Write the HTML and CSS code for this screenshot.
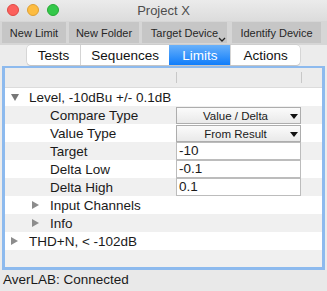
FILE: index.html
```html
<!DOCTYPE html>
<html lang="en">
<head>
    <meta charset="UTF-8">
    <title>Project X</title>
    <link rel="stylesheet" href="styles.css">
</head>
<body>
    <div class="window">
        <div class="titlebar">
            <div class="lights">
                <span class="light red"></span>
                <span class="light yellow"></span>
                <span class="light green"></span>
            </div>
            <div class="title">Project X</div>
        </div>

        <div class="toolbar">
            <button class="tool w-limit">New Limit</button>
            <button class="tool w-folder">New Folder</button>
            <button class="tool w-target">Target Device<svg class="chev" width="8" height="5" viewBox="0 0 8 5"><path d="M1 1 L4 4 L7 1" fill="none" stroke="#222" stroke-width="1.3"/></svg></button>
            <button class="tool w-identify">Identify Device</button>
        </div>

        <div class="tabrow">
            <div class="segmented">
                <div class="seg s-tests">Tests</div>
                <div class="seg s-seq">Sequences</div>
                <div class="seg s-limits active">Limits</div>
                <div class="seg s-actions">Actions</div>
            </div>
        </div>

        <div class="outline">
            <div class="row header">
                <div class="cell"></div>
                <div class="cell divided"></div>
                <div class="cell divided"></div>
            </div>
            <div class="row">
                <div class="cell name lvl0"><span class="tri open"></span>Level, -10dBu +/- 0.1dB</div>
                <div class="cell"></div>
                <div class="cell"></div>
            </div>
            <div class="row alt">
                <div class="cell name lvl1">Compare Type</div>
                <div class="cell"><div class="popup">Value / Delta<span class="arrow"></span></div></div>
                <div class="cell"></div>
            </div>
            <div class="row">
                <div class="cell name lvl1">Value Type</div>
                <div class="cell"><div class="popup">From Result<span class="arrow"></span></div></div>
                <div class="cell"></div>
            </div>
            <div class="row alt">
                <div class="cell name lvl1">Target</div>
                <div class="cell"><div class="field">-10</div></div>
                <div class="cell"></div>
            </div>
            <div class="row">
                <div class="cell name lvl1">Delta Low</div>
                <div class="cell"><div class="field">-0.1</div></div>
                <div class="cell"></div>
            </div>
            <div class="row alt">
                <div class="cell name lvl1">Delta High</div>
                <div class="cell"><div class="field">0.1</div></div>
                <div class="cell"></div>
            </div>
            <div class="row">
                <div class="cell name lvl1"><span class="tri"></span>Input Channels</div>
                <div class="cell"></div>
                <div class="cell"></div>
            </div>
            <div class="row alt">
                <div class="cell name lvl1"><span class="tri"></span>Info</div>
                <div class="cell"></div>
                <div class="cell"></div>
            </div>
            <div class="row">
                <div class="cell name lvl0"><span class="tri"></span>THD+N, &lt; -102dB</div>
                <div class="cell"></div>
                <div class="cell"></div>
            </div>
            <div class="row alt empty">
                <div class="cell"></div>
                <div class="cell"></div>
                <div class="cell"></div>
            </div>
        </div>

        <div class="status">AverLAB: Connected</div>
    </div>
</body>
</html>
```

FILE: styles.css
```css
body {
    margin: 0;
    font-family: "Liberation Sans", Arial, sans-serif;
    color: #1a1a1a;
    background: #ececec;
}

.window {
    width: 327px;
    height: 291px;
    display: flex;
    flex-direction: column;
    background: #ececec;
    overflow: hidden;
}

/* title bar */
.titlebar {
    height: 21px;
    position: relative;
    background: linear-gradient(#ebebeb, #dcdcdc);
    display: flex;
    align-items: center;
    justify-content: center;
}

.lights {
    position: absolute;
    left: 7px;
    top: 4px;
    display: flex;
    gap: 8px;
}

.light {
    width: 12px;
    height: 12px;
    border-radius: 50%;
    box-sizing: border-box;
}

.red { background: #fc605c; border: 0.5px solid #de4a44; }
.yellow { background: #fdbc40; border: 0.5px solid #dea034; }
.green { background: #34c84a; border: 0.5px solid #27aa35; }

.title {
    font-size: 13px;
    color: #4d4d4d;
}

/* toolbar */
.toolbar {
    height: 24px;
    display: flex;
    align-items: flex-start;
    padding: 1px 0 0 2px;
    gap: 3px;
    background: #d6d6d6;
    box-sizing: border-box;
}

.tool {
    height: 21px;
    border: none;
    padding: 0;
    background: #c6c6c6;
    font-family: "Liberation Sans", Arial, sans-serif;
    font-size: 11px;
    color: #262626;
    position: relative;
}

.w-limit { width: 64px; }
.w-folder { width: 70px; }
.w-target { width: 85px; }
.w-identify { width: 89px; margin-left: 2px; }

.chev {
    position: absolute;
    right: 1px;
    bottom: 1px;
}

/* tabs */
.tabrow {
    height: 21px;
    padding-left: 27px;
    box-sizing: border-box;
}

.segmented {
    display: flex;
    width: 273px;
    height: 20px;
    background: #fff;
    border-radius: 4px;
    box-shadow: 0 0 0 0.5px #c4c4c4, 0 1px 1px rgba(0, 0, 0, 0.18);
    overflow: hidden;
}

.seg {
    font-size: 13.5px;
    display: flex;
    align-items: center;
    justify-content: center;
    border-left: 1px solid #d4d4d4;
    color: #111;
}

.seg:first-child { border-left: none; }
.s-tests { width: 53px; }
.s-seq { width: 89px; }
.s-limits { width: 61px; }
.s-actions { width: 69px; }

.seg.active {
    background: linear-gradient(#69b1fa, #0f7dfb);
    color: #fff;
    border-left: none;
}

/* outline view */
.outline {
    margin: 0 2px;
    height: 204px;
    border: 3px solid #8dbaee;
    border-top-width: 2px;
    background: #eeeeee;
    box-sizing: border-box;
}

.row {
    display: grid;
    grid-template-columns: 171px 125px 1fr;
    height: 18px;
    background: #fff;
}

.row.alt { background: #f0f0f0; }
.row.empty { height: 17px; }

.row.header {
    height: 20px;
    background: #ececec;
    border-bottom: 1px solid #dcdcdc;
    box-sizing: border-box;
}

.cell.divided {
    border-left: 1px solid #c8c8c8;
    margin: 4px 0;
}

.name {
    font-size: 13.5px;
    display: flex;
    align-items: center;
    white-space: nowrap;
}

.lvl0 { padding-left: 6px; }
.lvl1 { padding-left: 27px; }
.lvl1:not(:has(.tri)) { padding-left: 45px; }

.tri {
    width: 0;
    height: 0;
    border-top: 4px solid transparent;
    border-bottom: 4px solid transparent;
    border-left: 7px solid #8c8c8c;
    margin-right: 11px;
}

.tri.open {
    border-left: 4px solid transparent;
    border-right: 4px solid transparent;
    border-top: 7px solid #777;
    border-bottom: none;
    margin-right: 10px;
}

.popup {
    height: 17px;
    margin-top: 1px;
    border: 1px solid #adadad;
    box-sizing: border-box;
    background: linear-gradient(#fbfbfb, #e9e9e9);
    font-size: 11.5px;
    display: flex;
    align-items: center;
    justify-content: center;
    position: relative;
    padding-right: 6px;
}

.arrow {
    position: absolute;
    right: 2px;
    top: 6px;
    border-left: 4px solid transparent;
    border-right: 4px solid transparent;
    border-top: 5px solid #111;
}

.field {
    height: 18px;
    border: 1px solid #bcbcbc;
    background: #fff;
    box-sizing: border-box;
    font-size: 13.5px;
    padding-left: 2px;
    line-height: 16px;
}

.status {
    flex: 1;
    font-size: 13.5px;
    padding: 2px 0 0 3px;
    background: #e9e9e9;
}
```
